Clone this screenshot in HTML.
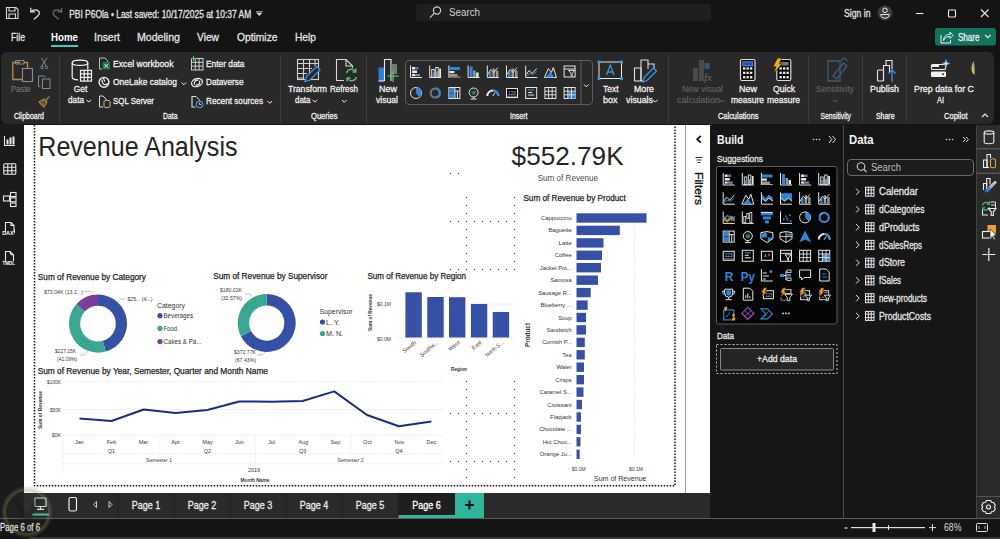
<!DOCTYPE html>
<html><head><meta charset="utf-8">
<style>
*{margin:0;padding:0;box-sizing:border-box}
html,body{width:1000px;height:539px;overflow:hidden;background:#141414;font-family:"Liberation Sans",sans-serif}
svg{position:absolute;left:0;top:0}
</style></head><body>
<svg width="1000" height="539" viewBox="0 0 1000 539" font-family="Liberation Sans">
<rect x="0" y="0" width="1000" height="539" fill="#141414" />
<rect x="1" y="52" width="993" height="72" rx="6" fill="#292929"/>
<rect x="0" y="124" width="24" height="394" fill="#1b1b1b" />
<rect x="24" y="125" width="662" height="368" fill="#ffffff" />
<rect x="685" y="125" width="1" height="368" fill="#a0a0a0" />
<rect x="686" y="125" width="24" height="368" fill="#ffffff" />
<rect x="710" y="125" width="133" height="393" fill="#161616" />
<rect x="843" y="125" width="1" height="393" fill="#4a4a4a" />
<rect x="844" y="125" width="132" height="393" fill="#161616" />
<rect x="976" y="125" width="24" height="393" fill="#2a2a2a" />
<rect x="976" y="125" width="1" height="393" fill="#444" />
<rect x="24" y="493" width="686" height="25" fill="#2a2a2a" />
<rect x="0" y="518" width="1000" height="21" fill="#151515" />
<rect x="0" y="518" width="1000" height="1" fill="#5a5a5a" />
<rect x="30" y="537" width="970" height="2" fill="#363636" />
<g fill="none" stroke="#d8d8d8" stroke-width="1.1"><path d="M6.5,7.5H16L18,9.5V18.5H6.5Z"/><path d="M9,7.5V11H15V7.5M9,18.5V14H15.5V18.5"/></g>
<g fill="none" stroke="#e0e0e0" stroke-width="1.2" stroke-linecap="round"><path d="M30.8,8.2V11.8H34.5"/><path d="M30.9,11.7C33,9.3 37.5,9.2 39.2,11.8C39.8,13 39.2,14.5 38,15.8L34.2,19"/></g>
<g fill="none" stroke="#6e6e6e" stroke-width="1.2" stroke-linecap="round"><path d="M61.7,8.2V11.8H58"/><path d="M61.6,11.7C59.5,9.3 55,9.2 53.3,11.8C52.7,13 53.3,14.5 54.5,15.8L58.3,19"/></g>
<text x="69.2" y="18" font-size="10" fill="#e6e6e6" textLength="182" lengthAdjust="spacingAndGlyphs"  stroke="#e6e6e6" stroke-width="0.28">PBI P6Ola • Last saved: 10/17/2025 at 10:37 AM</text>
<path d="M256,11.8H262.5M257,13.3H261.5L259.2,15.5Z" stroke="#ddd" stroke-width="0.9" fill="#ddd"/>
<rect x="416" y="4" width="295" height="17" rx="3" fill="#1f1f1f"/>
<g fill="none" stroke="#d0d0d0" stroke-width="1.2"><circle cx="437" cy="10.5" r="3.6"/><path d="M434.4,13.2L430,17.6"/></g>
<text x="449" y="16.2" font-size="10" fill="#cfcfcf" textLength="31" lengthAdjust="spacingAndGlyphs" >Search</text>
<text x="844" y="17" font-size="10" fill="#e0e0e0" textLength="26.5" lengthAdjust="spacingAndGlyphs"  stroke="#e0e0e0" stroke-width="0.28">Sign in</text>
<circle cx="885" cy="13" r="7.5" fill="#3b3b3b"/>
<g fill="none" stroke="#e8e8e8" stroke-width="1"><circle cx="885" cy="10.3" r="2.3"/><path d="M880.8,14.5H889.2A4.2,3.6 0 0 1 880.8,14.5Z"/></g>
<g stroke="#e8e8e8" stroke-width="1.1" fill="none"><path d="M916,13.5H923.5"/><rect x="948.5" y="10" width="7" height="7" rx="0.5"/><path d="M981,9.5L988.5,17M988.5,9.5L981,17"/></g>
<text x="11" y="41" font-size="11" fill="#e4e4e4" textLength="14" lengthAdjust="spacingAndGlyphs"  stroke="#e4e4e4" stroke-width="0.28">File</text>
<text x="94" y="41" font-size="11" fill="#e4e4e4" textLength="26" lengthAdjust="spacingAndGlyphs"  stroke="#e4e4e4" stroke-width="0.28">Insert</text>
<text x="137" y="41" font-size="11" fill="#e4e4e4" textLength="43" lengthAdjust="spacingAndGlyphs"  stroke="#e4e4e4" stroke-width="0.28">Modeling</text>
<text x="197" y="41" font-size="11" fill="#e4e4e4" textLength="22" lengthAdjust="spacingAndGlyphs"  stroke="#e4e4e4" stroke-width="0.28">View</text>
<text x="237" y="41" font-size="11" fill="#e4e4e4" textLength="40.5" lengthAdjust="spacingAndGlyphs"  stroke="#e4e4e4" stroke-width="0.28">Optimize</text>
<text x="295" y="41" font-size="11" fill="#e4e4e4" textLength="21" lengthAdjust="spacingAndGlyphs"  stroke="#e4e4e4" stroke-width="0.28">Help</text>
<text x="51" y="41" font-size="11" fill="#ffffff" textLength="27" lengthAdjust="spacingAndGlyphs" font-weight="bold" >Home</text>
<rect x="51" y="45" width="27" height="2" fill="#40c9b5" />
<rect x="935" y="28" width="61" height="17.5" rx="3" fill="#12735f"/>
<g fill="none" stroke="#e8f5f2" stroke-width="1"><path d="M941,35V43H950.5V40"/><path d="M943.5,40.5C944,36 946,34.5 950,34.5V32L953,35.5L950,38.5V36.5C947,36.5 945,37.5 943.5,40.5Z"/></g>
<text x="958" y="40.5" font-size="10" fill="#f0f0f0" textLength="21.5" lengthAdjust="spacingAndGlyphs"  stroke="#f0f0f0" stroke-width="0.28">Share</text>
<path d="M985,34.8L987.8,37.6L990.6,34.8" stroke="#f0f0f0" stroke-width="1.1" fill="none"/>
<rect x="59" y="55" width="1" height="67" fill="#3d3d3d" />
<rect x="280" y="55" width="1" height="67" fill="#3d3d3d" />
<rect x="366" y="55" width="1" height="67" fill="#3d3d3d" />
<rect x="668" y="55" width="1" height="67" fill="#3d3d3d" />
<rect x="808" y="55" width="1" height="67" fill="#3d3d3d" />
<rect x="862" y="55" width="1" height="67" fill="#3d3d3d" />
<rect x="906" y="55" width="1" height="67" fill="#3d3d3d" />
<text x="14" y="119.3" font-size="8.5" fill="#f0f0f0" textLength="30" lengthAdjust="spacingAndGlyphs"  stroke="#f0f0f0" stroke-width="0.28">Clipboard</text>
<text x="163" y="119.3" font-size="8.5" fill="#f0f0f0" textLength="14.5" lengthAdjust="spacingAndGlyphs"  stroke="#f0f0f0" stroke-width="0.28">Data</text>
<text x="311" y="119.3" font-size="8.5" fill="#f0f0f0" textLength="26.5" lengthAdjust="spacingAndGlyphs"  stroke="#f0f0f0" stroke-width="0.28">Queries</text>
<text x="510" y="119.3" font-size="8.5" fill="#f0f0f0" textLength="17.5" lengthAdjust="spacingAndGlyphs"  stroke="#f0f0f0" stroke-width="0.28">Insert</text>
<text x="718" y="119.3" font-size="8.5" fill="#f0f0f0" textLength="40.5" lengthAdjust="spacingAndGlyphs"  stroke="#f0f0f0" stroke-width="0.28">Calculations</text>
<text x="820.5" y="119.3" font-size="8.5" fill="#f0f0f0" textLength="30.5" lengthAdjust="spacingAndGlyphs"  stroke="#f0f0f0" stroke-width="0.28">Sensitivity</text>
<text x="876" y="119.3" font-size="8.5" fill="#f0f0f0" textLength="18.5" lengthAdjust="spacingAndGlyphs"  stroke="#f0f0f0" stroke-width="0.28">Share</text>
<text x="944" y="119.3" font-size="8.5" fill="#f0f0f0" textLength="23.5" lengthAdjust="spacingAndGlyphs"  stroke="#f0f0f0" stroke-width="0.28">Copilot</text>
<path d="M982,117L985,114L988,117" stroke="#eee" stroke-width="1.1" fill="none"/>
<g fill="none" stroke-width="1.3"><path d="M20,62.5H12.8V79.5H22" stroke="#c08a3c"/><path d="M15.5,60.5H24V64H15.5Z" stroke="#8a8a8a" stroke-width="1"/><path d="M24,62.5H27.5V68" stroke="#c08a3c"/><rect x="22.5" y="68.5" width="10" height="13" stroke="#8c8c8c" stroke-width="1.1"/></g>
<text x="11" y="91.5" font-size="9" fill="#808080" textLength="19.5" lengthAdjust="spacingAndGlyphs" >Paste</text>
<g fill="none" stroke="#8a8a8a" stroke-width="1"><path d="M41.5,58L46.5,66M47,58L42,66"/><circle cx="42" cy="67.5" r="1.3" stroke="#5a8ab0"/><circle cx="46.5" cy="67.5" r="1.3" stroke="#5a8ab0"/><path d="M40.5,86.5H38.5V76H44.5L45.5,77"/><rect x="42.5" y="79" width="7.5" height="9.5"/></g>
<g fill="none" stroke-width="1.1"><path d="M45,101L49.5,96.5" stroke="#8a8a8a"/><path d="M39,102L44,99L47,102L44,107Z" stroke="#b0813a" fill="#6a5030"/></g>
<g fill="none" stroke="#f4f4f4" stroke-width="1.2"><ellipse cx="80" cy="62.8" rx="7.8" ry="2.6"/><path d="M72.2,62.8V77.2C72.2,78.6 74.5,79.6 78,79.9"/><path d="M87.8,62.8V69.5"/><rect x="80.5" y="70.3" width="11" height="10.8" fill="#292929"/><path d="M80.5,73.8H91.5M80.5,77.4H91.5M84.2,70.3V81M87.8,70.3V81"/></g>
<text x="73.8" y="92" font-size="9.5" fill="#f2f2f2" textLength="13.5" lengthAdjust="spacingAndGlyphs"  stroke="#f2f2f2" stroke-width="0.28">Get</text>
<text x="68" y="103.2" font-size="9.5" fill="#f2f2f2" textLength="16" lengthAdjust="spacingAndGlyphs"  stroke="#f2f2f2" stroke-width="0.28">data</text>
<path d="M86.5,99.8L88.8,102.1L91.1,99.8" stroke="#f2f2f2" stroke-width="1" fill="none"/>
<g fill="none" stroke="#bdbdbd" stroke-width="1"><path d="M105,58H99.5V69H102"/><path d="M105,58L107.5,60.5V62"/></g><rect x="102.5" y="62" width="7.5" height="7.5" fill="#1e7a45"/><path d="M104.5,64L108,67.5M108,64L104.5,67.5" stroke="#fff" stroke-width="0.9"/>
<text x="113" y="67.2" font-size="9.5" fill="#f2f2f2" textLength="60.5" lengthAdjust="spacingAndGlyphs"  stroke="#f2f2f2" stroke-width="0.28">Excel workbook</text>
<g fill="none" stroke="#f0f0f0" stroke-width="1.2"><circle cx="104" cy="82.3" r="4.9" stroke-width="1.4"/><path d="M101.8,79.5Q102.3,83.6 104,84.5Q106.2,85 108.6,83.2M103.6,77.6Q103.6,80.2 105,81.5"/></g>
<text x="113" y="85.3" font-size="9.5" fill="#f2f2f2" textLength="64" lengthAdjust="spacingAndGlyphs"  stroke="#f2f2f2" stroke-width="0.28">OneLake catalog</text>
<path d="M181.5,82.5L183.8,84.8L186.1,82.5" stroke="#f2f2f2" stroke-width="1" fill="none"/>
<g fill="none" stroke-width="1"><path d="M103,96H99.5V107H103" stroke="#d8d8d8"/><path d="M103,96L106,99V100" stroke="#d8d8d8"/><path d="M104,101.5C104,100 110,100 110,101.5V106.5C110,108 104,108 104,106.5Z" stroke="#e0b870"/></g>
<text x="113" y="104" font-size="9.5" fill="#f2f2f2" textLength="41" lengthAdjust="spacingAndGlyphs"  stroke="#f2f2f2" stroke-width="0.28">SQL Server</text>
<g fill="none" stroke="#d0d0d0" stroke-width="1"><rect x="191.5" y="58.5" width="11.5" height="11.5"/><path d="M191.5,62.3H203M191.5,66.1H203M195.3,58.5V70M199.1,58.5V70"/></g><path d="M191,58.5H196M193.5,56V61" stroke="#4fc36a" stroke-width="1.2"/>
<text x="206" y="67.2" font-size="9.5" fill="#f2f2f2" textLength="38.5" lengthAdjust="spacingAndGlyphs"  stroke="#f2f2f2" stroke-width="0.28">Enter data</text>
<g fill="none" stroke="#f0f0f0" stroke-width="1.2"><ellipse cx="197" cy="82.6" rx="5.6" ry="3.9" transform="rotate(-20 197 82.6)"/><path d="M194.5,84.5C193.5,82 195.5,79.8 198.5,80.2M199.5,80.8C200.5,83.2 198.5,85.5 195.5,85"/></g>
<text x="206" y="85.3" font-size="9.5" fill="#f2f2f2" textLength="37.5" lengthAdjust="spacingAndGlyphs"  stroke="#f2f2f2" stroke-width="0.28">Dataverse</text>
<g fill="none" stroke-width="1"><path d="M196,96.5H192V107H195.5" stroke="#e0e0e0" stroke-width="1.1"/><path d="M196,96.5L199.5,100V100.5" stroke="#e0e0e0"/><circle cx="199.6" cy="104.4" r="3.4" stroke="#6aaee8" stroke-width="1"/><path d="M199.6,102.6V104.6H201.2" stroke="#e8e8e8" stroke-width="0.9"/></g>
<text x="206" y="104" font-size="9.5" fill="#f2f2f2" textLength="57" lengthAdjust="spacingAndGlyphs"  stroke="#f2f2f2" stroke-width="0.28">Recent sources</text>
<path d="M267.5,101L269.8,103.3L272.1,101" stroke="#f2f2f2" stroke-width="1" fill="none"/>
<g fill="none" stroke="#d0d0d0" stroke-width="1.1"><rect x="297.5" y="59.5" width="21" height="20"/><path d="M297.5,63.5H318.5M297.5,68.5H312M297.5,73.5H307M297.5,78H304M303.5,59.5V79.5M309.5,59.5V73M315,59.5V66"/></g><path d="M305,81.5L306.5,76.5L316.5,66.5L320,70L310,80Z" fill="#292929" stroke="#3a96dd" stroke-width="1.3"/>
<text x="288" y="91.8" font-size="9.5" fill="#f2f2f2" textLength="39" lengthAdjust="spacingAndGlyphs"  stroke="#f2f2f2" stroke-width="0.28">Transform</text>
<text x="295" y="103.2" font-size="9.5" fill="#f2f2f2" textLength="15.5" lengthAdjust="spacingAndGlyphs"  stroke="#f2f2f2" stroke-width="0.28">data</text>
<path d="M312.5,99.8L314.8,102.1L317.1,99.8" stroke="#f2f2f2" stroke-width="1" fill="none"/>
<g fill="none" stroke="#d8d8d8" stroke-width="1.1"><path d="M346,59.5H336.5V80.5H344"/><path d="M346,59.5L352.5,66V68"/><path d="M346,59.5V66H352.5"/></g><g fill="none" stroke="#5ac46a" stroke-width="1.3"><path d="M346.5,73A5,5 0 0 1 355.5,71.5"/><path d="M356.5,77A5,5 0 0 1 347.5,78.5"/><path d="M355.8,68.5V72H352.5M347,81.5V78H350.5"/></g>
<text x="330" y="91.8" font-size="9.5" fill="#f2f2f2" textLength="28" lengthAdjust="spacingAndGlyphs"  stroke="#f2f2f2" stroke-width="0.28">Refresh</text>
<path d="M342,100L344.3,102.3L346.6,100" stroke="#f2f2f2" stroke-width="1" fill="none"/>
<rect x="378.5" y="67.5" width="6" height="13.5" fill="#2e7fd4"/><g fill="none" stroke="#e8e8e8" stroke-width="1.1"><path d="M384.5,81V59.5H391V81"/><path d="M378.5,81H384.5"/></g><rect x="391.5" y="64" width="5.5" height="10" fill="#777"/><path d="M393,70.5V82M387.5,76.2H398.5" stroke="#4fc36a" stroke-width="1.3"/>
<text x="379" y="91.8" font-size="9.5" fill="#f2f2f2" textLength="18" lengthAdjust="spacingAndGlyphs"  stroke="#f2f2f2" stroke-width="0.28">New</text>
<text x="376" y="103.2" font-size="9.5" fill="#f2f2f2" textLength="22" lengthAdjust="spacingAndGlyphs"  stroke="#f2f2f2" stroke-width="0.28">visual</text>
<rect x="405.5" y="60.5" width="187" height="44" rx="3.5" fill="none" stroke="#5c5c5c" stroke-width="1"/>
<rect x="580.5" y="61" width="1" height="43" fill="#5c5c5c" />
<path d="M584,84.5L586.3,86.8L588.6,84.5" stroke="#f2f2f2" stroke-width="1" fill="none"/>
<g stroke-width="1">
<path d="M410.5,65.5V77.5H422.0" stroke="#e8e8e8" fill="none"/><rect x="412.0" y="67.0" width="3" height="2.5" fill="#e8e8e8"/><rect x="415.0" y="67.0" width="3.5" height="2.5" fill="#2f86d8"/><rect x="412.0" y="70.5" width="5" height="2.5" fill="#e8e8e8"/><rect x="412.0" y="74.0" width="3" height="2.2" fill="#e8e8e8"/><rect x="415.0" y="74.0" width="5" height="2.2" fill="#888"/>
<circle cx="416.0" cy="93" r="5.5" fill="none" stroke="#e8e8e8"/><path d="M416.0,87.5A5.5,5.5 0 0 1 419.5,97.2L416.0,93Z" fill="#2f86d8"/>
<path d="M429.7,65.5V77.5H441.2" stroke="#e8e8e8" fill="none"/><rect x="431.7" y="69.5" width="2.5" height="7.5" fill="none" stroke="#e8e8e8" stroke-width="0.9"/><rect x="432.2" y="72.5" width="1.8" height="4" fill="#2f86d8"/><rect x="435.7" y="67.5" width="2.5" height="9.5" fill="none" stroke="#e8e8e8" stroke-width="0.9"/><rect x="436.2" y="71.5" width="1.8" height="5" fill="#999"/><rect x="439.2" y="68.5" width="1.8" height="8.5" fill="#e8e8e8"/>
<circle cx="435.2" cy="93" r="4.5" fill="none" stroke="#777" stroke-width="2"/><path d="M435.2,88.5A4.5,4.5 0 0 1 436.2,97.4" fill="none" stroke="#2f86d8" stroke-width="2"/>
<path d="M448.9,65.5V77.5" stroke="#e8e8e8" fill="none"/><rect x="449.4" y="67.0" width="10.5" height="3" fill="#2f86d8"/><rect x="449.4" y="71.0" width="5" height="2.2" fill="#e8e8e8"/><rect x="449.4" y="74.0" width="8" height="2.5" fill="#999"/><path d="M448.4,77.0H460.4" stroke="#aaa"/>
<rect x="448.9" y="87.5" width="11" height="11" fill="none" stroke="#e8e8e8"/><rect x="449.4" y="88" width="5" height="5" fill="#2f86d8"/><rect x="449.4" y="93.5" width="5" height="4.5" fill="#2f86d8"/><path d="M454.9,88V98M454.9,91H459.4M457.4,91V98" stroke="#e8e8e8"/>
<path d="M468.1,65.5V77.5H479.6" stroke="#e8e8e8" fill="none"/><rect x="469.6" y="66.5" width="3" height="10.5" fill="#2f86d8"/><rect x="473.1" y="70.5" width="2.5" height="6.5" fill="#999"/><rect x="476.1" y="72.5" width="2.5" height="4.5" fill="#e8e8e8"/>
<circle cx="473.6" cy="92.5" r="4.5" fill="none" stroke="#e8e8e8"/><circle cx="473.6" cy="92.5" r="2.6" fill="#1d4a30"/><path d="M472.1,91.5L474.1,94L475.1,91" stroke="#4cb070" fill="none" stroke-width="0.9"/><path d="M473.6,97V99M470.6,99H476.6" stroke="#e8e8e8"/>
<path d="M487.3,65.5V77.5H498.8" stroke="#e8e8e8" fill="none"/><rect x="488.8" y="71.5" width="2.5" height="5.5" fill="#2f86d8"/><rect x="492.3" y="68.5" width="2.5" height="8.5" fill="#999"/><rect x="495.8" y="70.5" width="2.5" height="6.5" fill="#999"/><path d="M487.8,74.5L490.8,69.5L493.8,72.5L497.8,67.5" stroke="#e8e8e8" fill="none" stroke-width="0.9"/>
<path d="M487.3,96A5.5,5.5 0 0 1 498.3,96" fill="none" stroke="#e8e8e8" stroke-width="2"/><path d="M492.8,90.5A5.5,5.5 0 0 1 498.3,96" fill="none" stroke="#2f86d8" stroke-width="2"/><path d="M492.8,96L494.8,93" stroke="#e8e8e8"/>
<path d="M506.5,65.5V77.5H518.0" stroke="#e8e8e8" fill="none"/><rect x="508.0" y="71.5" width="2.5" height="5.5" fill="#2f86d8"/><rect x="511.5" y="68.5" width="2.5" height="8.5" fill="#999"/><rect x="515.0" y="70.5" width="2.5" height="6.5" fill="#999"/><path d="M507.0,74.5L510.0,69.5L513.0,72.5L517.0,67.5" stroke="#e8e8e8" fill="none" stroke-width="0.9"/>
<rect x="506.5" y="88.5" width="11" height="9" fill="#0a0a0a" stroke="#e8e8e8"/><text x="508.0" y="94.6" font-size="5.5" fill="#8ab8e8" textLength="8" lengthAdjust="spacingAndGlyphs">123</text><path d="M507.0,96.2H517.0" stroke="#888"/>
<path d="M525.7,65.5V77.5H537.2" stroke="#e8e8e8" fill="none"/><path d="M526.2,74.5L529.2,70.5L532.2,73.5L536.7,68.5" stroke="#e8e8e8" fill="none"/><path d="M526.2,76.0L530.2,73.5L533.2,74.5L536.7,71.5" stroke="#2f86d8" fill="none"/>
<rect x="525.7" y="87.5" width="11" height="11" fill="none" stroke="#e8e8e8"/><path d="M528.2,90H534.2" stroke="#2f86d8" stroke-width="1.2"/><path d="M528.2,92.5H532.2M528.2,95H534.2" stroke="#e8e8e8"/>
<path d="M544.4,77.5L548.4,68.5L551.4,72.5L553.4,67.5L556.4,77.5Z" fill="none" stroke="#e8e8e8"/><path d="M545.4,77.5L550.4,71.5L554.4,77.5Z" fill="#2f86d8"/>
<rect x="544.9" y="87.5" width="11" height="11" fill="none" stroke="#e8e8e8"/><path d="M544.9,91.2H555.9M544.9,94.8H555.9M548.6,87.5V98.5M552.1999999999999,87.5V98.5" stroke="#e8e8e8" stroke-width="0.9"/>
<rect x="564.1" y="66.0" width="11" height="11" fill="none" stroke="#e8e8e8"/><path d="M564.1,69.0H575.1" stroke="#e8e8e8"/><path d="M568.6,70.5H574.6L572.1,73.5V76.5L571.1,75.5V73.5Z" fill="none" stroke="#e8e8e8" stroke-width="0.9"/>
<rect x="564.1" y="87.5" width="11" height="11" fill="none" stroke="#e8e8e8"/><rect x="568.1" y="91.5" width="7" height="7" fill="#2f86d8"/><path d="M564.1,91.2H575.1M564.1,94.8H575.1M567.8000000000001,87.5V98.5M571.4,87.5V98.5" stroke="#e8e8e8" stroke-width="0.9"/>
</g>
<rect x="599" y="62" width="22.5" height="16.5" fill="none" stroke="#e8e8e8" stroke-width="1"/>
<rect x="597.5" y="60.5" width="3" height="3" fill="#3a96dd"/>
<rect x="620.0" y="60.5" width="3" height="3" fill="#3a96dd"/>
<rect x="597.5" y="77.0" width="3" height="3" fill="#3a96dd"/>
<rect x="620.0" y="77.0" width="3" height="3" fill="#3a96dd"/>
<path d="M606.5,75L610.3,65L614,75M607.8,72H612.8" stroke="#3a96dd" stroke-width="1.3" fill="none"/>
<text x="603" y="91.8" font-size="9.5" fill="#f2f2f2" textLength="15.5" lengthAdjust="spacingAndGlyphs"  stroke="#f2f2f2" stroke-width="0.28">Text</text>
<text x="603" y="103.2" font-size="9.5" fill="#f2f2f2" textLength="14.5" lengthAdjust="spacingAndGlyphs"  stroke="#f2f2f2" stroke-width="0.28">box</text>
<g fill="none" stroke="#e0e0e0" stroke-width="1.1"><path d="M634.5,81V68H641V81"/><path d="M641,81V60H648V69"/><path d="M648,64H654V69"/><path d="M634.5,81H644"/></g><path d="M643,82L644,77.5L653.5,68L656.5,71L647,80.5Z" fill="#292929" stroke="#3a96dd" stroke-width="1.3"/>
<text x="634" y="91.8" font-size="9.5" fill="#f2f2f2" textLength="20" lengthAdjust="spacingAndGlyphs"  stroke="#f2f2f2" stroke-width="0.28">More</text>
<text x="626" y="103.2" font-size="9.5" fill="#f2f2f2" textLength="27" lengthAdjust="spacingAndGlyphs"  stroke="#f2f2f2" stroke-width="0.28">visuals</text>
<path d="M653,99.8L655.3,102.1L657.6,99.8" stroke="#f2f2f2" stroke-width="1" fill="none"/>
<g fill="#4a4a4a"><rect x="693" y="68" width="5" height="13"/><rect x="699" y="60" width="5" height="21"/></g><rect x="704.5" y="63" width="5" height="6" fill="#2b5a80"/><text x="704" y="81" font-size="11" font-style="italic" fill="#6a6a6a" font-family="Liberation Serif">fx</text>
<text x="682" y="91.8" font-size="9.5" fill="#6b6b6b" textLength="41" lengthAdjust="spacingAndGlyphs" >New visual</text>
<text x="677" y="103.2" font-size="9.5" fill="#6b6b6b" textLength="43" lengthAdjust="spacingAndGlyphs" >calculation</text>
<path d="M720,99.8L722.3,102.1L724.6,99.8" stroke="#6b6b6b" stroke-width="1" fill="none"/>
<rect x="740.5" y="59.5" width="14.5" height="21" rx="1.5" fill="#080808" stroke="#e0e0e0" stroke-width="1.2"/><rect x="742.8" y="61.8" width="10" height="4" fill="#1f4fb0" stroke="#6ab0f0" stroke-width="0.7"/>
<rect x="743.0" y="67.3" width="2.3" height="2.3" fill="#f0f0f0"/>
<rect x="746.5" y="67.3" width="2.3" height="2.3" fill="#f0f0f0"/>
<rect x="750.0" y="67.3" width="2.3" height="2.3" fill="#f0f0f0"/>
<rect x="743.0" y="71.7" width="2.3" height="2.3" fill="#f0f0f0"/>
<rect x="746.5" y="71.7" width="2.3" height="2.3" fill="#f0f0f0"/>
<rect x="750.0" y="71.7" width="2.3" height="2.3" fill="#f0f0f0"/>
<rect x="743.0" y="76.1" width="2.3" height="2.3" fill="#f0f0f0"/>
<rect x="746.5" y="76.1" width="2.3" height="2.3" fill="#f0f0f0"/>
<rect x="750.0" y="76.1" width="2.3" height="2.3" fill="#f0f0f0"/>
<text x="739" y="91.8" font-size="9.5" fill="#f2f2f2" textLength="18" lengthAdjust="spacingAndGlyphs"  stroke="#f2f2f2" stroke-width="0.28">New</text>
<text x="731" y="103.2" font-size="9.5" fill="#f2f2f2" textLength="33" lengthAdjust="spacingAndGlyphs"  stroke="#f2f2f2" stroke-width="0.28">measure</text>
<rect x="776.8" y="59.5" width="14" height="21" rx="1.5" fill="#080808" stroke="#d8d8d8" stroke-width="1.2"/><rect x="779" y="62" width="9.5" height="3.5" fill="#777"/>
<rect x="779.5" y="67.3" width="2.3" height="2.3" fill="#f0f0f0"/>
<rect x="783.0" y="67.3" width="2.3" height="2.3" fill="#f0f0f0"/>
<rect x="786.5" y="67.3" width="2.3" height="2.3" fill="#f0f0f0"/>
<rect x="779.5" y="71.7" width="2.3" height="2.3" fill="#f0f0f0"/>
<rect x="783.0" y="71.7" width="2.3" height="2.3" fill="#f0f0f0"/>
<rect x="786.5" y="71.7" width="2.3" height="2.3" fill="#f0f0f0"/>
<rect x="779.5" y="76.1" width="2.3" height="2.3" fill="#f0f0f0"/>
<rect x="783.0" y="76.1" width="2.3" height="2.3" fill="#f0f0f0"/>
<rect x="786.5" y="76.1" width="2.3" height="2.3" fill="#f0f0f0"/>
<path d="M777.5,58H782L779.2,63.8H782.2L773.5,73.5L775.8,66.8H772.8Z" fill="#f2a81e" stroke="#1a1a1a" stroke-width="0.7"/>
<text x="773" y="91.8" font-size="9.5" fill="#f2f2f2" textLength="22" lengthAdjust="spacingAndGlyphs"  stroke="#f2f2f2" stroke-width="0.28">Quick</text>
<text x="767" y="103.2" font-size="9.5" fill="#f2f2f2" textLength="33" lengthAdjust="spacingAndGlyphs"  stroke="#f2f2f2" stroke-width="0.28">measure</text>
<g fill="none" stroke="#3b5a78" stroke-width="1.3"><path d="M828,61H840V81H828Z"/><path d="M833,76L843.5,63L847,66L836.5,79Z"/><path d="M840,61L844,58L847.5,61"/></g>
<text x="816" y="91.8" font-size="9.5" fill="#6b6b6b" textLength="38" lengthAdjust="spacingAndGlyphs" >Sensitivity</text>
<path d="M833,99.8L835.3,102.1L837.6,99.8" stroke="#6b6b6b" stroke-width="1" fill="none"/>
<g fill="none" stroke="#e8e8e8" stroke-width="1.1"><rect x="877.5" y="70" width="6" height="11" rx="1"/><path d="M883.5,81V65.5H889.5V73"/><path d="M886,65.5V60.5H892V69"/></g><path d="M892,82V70M888.5,73.5L892,70L895.5,73.5" stroke="#3a96dd" stroke-width="1.3" fill="none"/>
<text x="870" y="91.8" font-size="9.5" fill="#f2f2f2" textLength="29" lengthAdjust="spacingAndGlyphs"  stroke="#f2f2f2" stroke-width="0.28">Publish</text>
<rect x="931.5" y="64.5" width="14" height="5" rx="1" fill="none" stroke="#f0f0f0" stroke-width="1.1"/><rect x="931" y="71.5" width="15" height="5.5" rx="1" fill="#f0f0f0"/><circle cx="943" cy="74.2" r="1" fill="#292929"/><path d="M932,66H939" stroke="#f0f0f0" stroke-width="2"/>
<path d="M946,59.5L947,62.5L950,63.5L947,64.5L946,67.5L945,64.5L942,63.5L945,62.5Z" fill="#cfe6ff" stroke="#3a96dd" stroke-width="0.6"/>
<text x="914" y="91.8" font-size="9.5" fill="#f2f2f2" textLength="60" lengthAdjust="spacingAndGlyphs"  stroke="#f2f2f2" stroke-width="0.28">Prep data for C</text>
<text x="937" y="103.2" font-size="9.5" fill="#f2f2f2" textLength="7" lengthAdjust="spacingAndGlyphs"  stroke="#f2f2f2" stroke-width="0.28">AI</text>
<path d="M973.5,61C974.5,65 975,70 974.5,75C973,74 971.5,72 971.5,69C971.5,66 972.5,63 973.5,61Z" fill="#e8c030"/><path d="M973.5,61C974.5,65 975,70 974.5,75L973.5,68Z" fill="#2c8fe0"/>
<g stroke="#111" stroke-width="1.5" stroke-dasharray="1.5 1.5" fill="none"><path d="M34.5,125V485.8H675V125"/></g>
<g stroke="#2a2a2a" stroke-width="1" stroke-dasharray="1 7" fill="none">
<path d="M450,173.5H462"/>
<path d="M466.5,197V272M514.5,197V272"/>
<path d="M450,221.5H517M450,269.5H517"/>
<path d="M466.5,381V480M514.5,381V480"/>
<path d="M450,413.5H517M450,461.5H517"/>
</g>
<text x="38.3" y="156.2" font-size="26.8" fill="#252423" textLength="199.2" lengthAdjust="spacingAndGlyphs" >Revenue Analysis</text>
<text x="511.6" y="165.4" font-size="25.5" fill="#252423" textLength="112" lengthAdjust="spacingAndGlyphs" >$552.79K</text>
<text x="537.7" y="180.8" font-size="8.3" fill="#4a4a4a" textLength="60.3" lengthAdjust="spacingAndGlyphs" >Sum of Revenue</text>
<text x="37.8" y="280.2" font-size="8.5" fill="#252423" textLength="108.2" lengthAdjust="spacingAndGlyphs" stroke="#252423" stroke-width="0.25">Sum of Revenue by Category</text>
<text x="213.2" y="279" font-size="8.5" fill="#252423" textLength="114.2" lengthAdjust="spacingAndGlyphs" stroke="#252423" stroke-width="0.25">Sum of Revenue by Supervisor</text>
<text x="367.5" y="278.9" font-size="8.5" fill="#252423" textLength="98.5" lengthAdjust="spacingAndGlyphs" stroke="#252423" stroke-width="0.25">Sum of Revenue by Region</text>
<text x="523.4" y="200.7" font-size="8.5" fill="#252423" textLength="102.3" lengthAdjust="spacingAndGlyphs" stroke="#252423" stroke-width="0.25">Sum of Revenue by Product</text>
<text x="37.7" y="374" font-size="8.5" fill="#252423" textLength="230.3" lengthAdjust="spacingAndGlyphs" stroke="#252423" stroke-width="0.25">Sum of Revenue by Year, Semester, Quarter and Month Name</text>
<path d="M98.00,294.60A29,29 0 0 1 105.75,351.55L102.76,340.75A17.8,17.8 0 0 0 98.00,305.80Z" fill="#3650a6"/>
<path d="M105.75,351.55A29,29 0 0 1 76.62,304.01L84.88,311.57A17.8,17.8 0 0 0 102.76,340.75Z" fill="#3aa68f"/>
<path d="M76.62,304.01A29,29 0 0 1 98.00,294.60L98.00,305.80A17.8,17.8 0 0 0 84.88,311.57Z" fill="#7d3c98"/>
<g stroke="#aaa" stroke-width="0.7" fill="none"><path d="M84,291.5H91L93,294"/><path d="M117,302L121,299H125"/><path d="M80,355H84L88,351"/></g>
<text x="44" y="293.5" font-size="5.5" fill="#3a3a3a" textLength="39" lengthAdjust="spacingAndGlyphs" >$73.04K (13.2...)</text>
<text x="127.5" y="301.2" font-size="5.5" fill="#3a3a3a" textLength="25" lengthAdjust="spacingAndGlyphs" >$25... (4...)</text>
<text x="55" y="352.8" font-size="5.5" fill="#3a3a3a" textLength="21" lengthAdjust="spacingAndGlyphs" >$227.15K</text>
<text x="57" y="360.6" font-size="5.5" fill="#3a3a3a" textLength="20" lengthAdjust="spacingAndGlyphs" >(41.09%)</text>
<text x="157" y="308.2" font-size="7" fill="#333" textLength="28" lengthAdjust="spacingAndGlyphs" >Category</text>
<circle cx="160" cy="315.7" r="2.6" fill="#3650a6"/>
<text x="163.5" y="318.2" font-size="7" fill="#333" textLength="29.5" lengthAdjust="spacingAndGlyphs" >Beverages</text>
<circle cx="160" cy="328.4" r="2.6" fill="#3aa68f"/>
<text x="163.5" y="330.9" font-size="7" fill="#333" textLength="13.5" lengthAdjust="spacingAndGlyphs" >Food</text>
<circle cx="160" cy="341.6" r="2.6" fill="#7d3c98"/>
<text x="163.5" y="344.1" font-size="7" fill="#333" textLength="38" lengthAdjust="spacingAndGlyphs" >Cakes &amp; Pa...</text>
<path d="M266.70,294.00A29,29 0 1 1 240.93,336.30L251.06,331.07A17.6,17.6 0 1 0 266.70,305.40Z" fill="#3650a6"/>
<path d="M240.93,336.30A29,29 0 0 1 266.70,294.00L266.70,305.40A17.6,17.6 0 0 0 251.06,331.07Z" fill="#3aa68f"/>
<g stroke="#aaa" stroke-width="0.7" fill="none"><path d="M245,294H250L252,297"/><path d="M257,355H262L265,352"/></g>
<text x="220" y="292" font-size="5.5" fill="#3a3a3a" textLength="22" lengthAdjust="spacingAndGlyphs" >$180.02K</text>
<text x="221" y="300" font-size="5.5" fill="#3a3a3a" textLength="21" lengthAdjust="spacingAndGlyphs" >(32.57%)</text>
<text x="234" y="354" font-size="5.5" fill="#3a3a3a" textLength="22" lengthAdjust="spacingAndGlyphs" >$372.77K</text>
<text x="235" y="362" font-size="5.5" fill="#3a3a3a" textLength="21" lengthAdjust="spacingAndGlyphs" >(67.43%)</text>
<text x="319.6" y="313.5" font-size="7" fill="#333" textLength="33" lengthAdjust="spacingAndGlyphs" >Supervisor</text>
<circle cx="322.5" cy="322" r="2.6" fill="#3650a6"/>
<text x="326" y="324.5" font-size="7" fill="#333" textLength="14" lengthAdjust="spacingAndGlyphs" >L. Y.</text>
<circle cx="322.5" cy="333.5" r="2.6" fill="#3aa68f"/>
<text x="326" y="336" font-size="7" fill="#333" textLength="17" lengthAdjust="spacingAndGlyphs" >M. N.</text>
<g stroke="#ccc" stroke-width="0.7" stroke-dasharray="1 1.5"><path d="M396,304H515M396,338H515"/></g>
<rect x="405.4" y="292.3" width="16.4" height="45.2" fill="#3650a6"/>
<rect x="427.3" y="297" width="16.4" height="40.5" fill="#3650a6"/>
<rect x="449" y="297.2" width="16.4" height="40.3" fill="#3650a6"/>
<rect x="470.9" y="304" width="16.4" height="33.5" fill="#3650a6"/>
<rect x="492.7" y="312" width="16.4" height="25.5" fill="#3650a6"/>
<text x="377" y="306" font-size="5.5" fill="#3a3a3a" textLength="14" lengthAdjust="spacingAndGlyphs" >$0.1M</text>
<text x="377" y="340.5" font-size="5.5" fill="#3a3a3a" textLength="14" lengthAdjust="spacingAndGlyphs" >$0.0M</text>
<text x="0" y="0" font-size="5.5" fill="#333" font-weight="bold" transform="translate(372,331) rotate(-90)" textLength="37" lengthAdjust="spacingAndGlyphs">Sum of Revenue</text>
<text x="0" y="0" font-size="5.5" fill="#3a3a3a" text-anchor="end" transform="translate(416.6,343) rotate(-40)" textLength="16" lengthAdjust="spacingAndGlyphs">South</text>
<text x="0" y="0" font-size="5.5" fill="#3a3a3a" text-anchor="end" transform="translate(438.5,343) rotate(-40)" textLength="22" lengthAdjust="spacingAndGlyphs">Southw...</text>
<text x="0" y="0" font-size="5.5" fill="#3a3a3a" text-anchor="end" transform="translate(460.2,343) rotate(-40)" textLength="13" lengthAdjust="spacingAndGlyphs">West</text>
<text x="0" y="0" font-size="5.5" fill="#3a3a3a" text-anchor="end" transform="translate(482,343) rotate(-40)" textLength="11" lengthAdjust="spacingAndGlyphs">East</text>
<text x="0" y="0" font-size="5.5" fill="#3a3a3a" text-anchor="end" transform="translate(503.9,343) rotate(-40)" textLength="22" lengthAdjust="spacingAndGlyphs">North-S...</text>
<text x="451" y="371" font-size="5.5" fill="#333" textLength="16" lengthAdjust="spacingAndGlyphs" font-weight="bold" >Region</text>
<g stroke="#d6d6d6" stroke-width="0.7" stroke-dasharray="1 1.5" fill="none"><path d="M62.6,381.7H443.5M62.6,409.5H443.5M62.6,435.3H443.5M62.6,454H443.5M62.6,463.7H443.5"/>
<path d="M159.8,436V454M255.3,436V473M350.6,436V454M62.6,436V475"/></g>
<text x="47" y="383.7" font-size="5" fill="#3a3a3a" textLength="14" lengthAdjust="spacingAndGlyphs" >$100K</text>
<text x="50" y="411.5" font-size="5" fill="#3a3a3a" textLength="11" lengthAdjust="spacingAndGlyphs" >$50K</text>
<text x="52" y="437.3" font-size="5" fill="#3a3a3a" textLength="9" lengthAdjust="spacingAndGlyphs" >$0K</text>
<text x="0" y="0" font-size="5" fill="#333" font-weight="bold" transform="translate(42,429) rotate(-90)" textLength="38" lengthAdjust="spacingAndGlyphs">Sum of Revenue</text>
<text x="79.5" y="444" font-size="5.5" fill="#3a3a3a" text-anchor="middle" >Jan</text>
<text x="111.5" y="444" font-size="5.5" fill="#3a3a3a" text-anchor="middle" >Feb</text>
<text x="143.5" y="444" font-size="5.5" fill="#3a3a3a" text-anchor="middle" >Mar</text>
<text x="175.5" y="444" font-size="5.5" fill="#3a3a3a" text-anchor="middle" >Apr</text>
<text x="207.5" y="444" font-size="5.5" fill="#3a3a3a" text-anchor="middle" >May</text>
<text x="239.4" y="444" font-size="5.5" fill="#3a3a3a" text-anchor="middle" >Jun</text>
<text x="271.4" y="444" font-size="5.5" fill="#3a3a3a" text-anchor="middle" >Jul</text>
<text x="303.4" y="444" font-size="5.5" fill="#3a3a3a" text-anchor="middle" >Aug</text>
<text x="335.4" y="444" font-size="5.5" fill="#3a3a3a" text-anchor="middle" >Sep</text>
<text x="367.4" y="444" font-size="5.5" fill="#3a3a3a" text-anchor="middle" >Oct</text>
<text x="399.4" y="444" font-size="5.5" fill="#3a3a3a" text-anchor="middle" >Nov</text>
<text x="431.4" y="444" font-size="5.5" fill="#3a3a3a" text-anchor="middle" >Dec</text>
<text x="111.5" y="452.5" font-size="5.5" fill="#3a3a3a" text-anchor="middle" >Q1</text>
<text x="207.4" y="452.5" font-size="5.5" fill="#3a3a3a" text-anchor="middle" >Q2</text>
<text x="302.6" y="452.5" font-size="5.5" fill="#3a3a3a" text-anchor="middle" >Q3</text>
<text x="398.9" y="452.5" font-size="5.5" fill="#3a3a3a" text-anchor="middle" >Q4</text>
<text x="159" y="461.5" font-size="5.5" fill="#3a3a3a" textLength="26" lengthAdjust="spacingAndGlyphs" text-anchor="middle" >Semester 1</text>
<text x="350.6" y="461.5" font-size="5.5" fill="#3a3a3a" textLength="26" lengthAdjust="spacingAndGlyphs" text-anchor="middle" >Semester 2</text>
<text x="254" y="472" font-size="5.5" fill="#3a3a3a" text-anchor="middle" >2019</text>
<text x="255" y="481.5" font-size="5.5" fill="#333" textLength="29" lengthAdjust="spacingAndGlyphs" text-anchor="middle" font-weight="bold" >Month Name</text>
<polyline points="79.5,418.6 111.5,421 143.7,409.5 175.5,413 207.4,410 239.2,401.5 271,401.7 302.6,401 334.2,391.4 367,415 398.9,426.3 431.4,421.5" fill="none" stroke="#1c2c82" stroke-width="2" stroke-linejoin="round"/>
<path d="M634.6,210V462" stroke="#ddd" stroke-width="0.7" stroke-dasharray="1 1.5"/>
<rect x="576.5" y="213.3" width="70.0" height="9.4" fill="#3650a6"/>
<text x="571.7" y="220.0" font-size="5.8" fill="#333" text-anchor="end" >Cappuccino</text>
<rect x="576.5" y="225.7" width="43.3" height="9.4" fill="#3650a6"/>
<text x="571.7" y="232.4" font-size="5.8" fill="#333" text-anchor="end" >Baguette</text>
<rect x="576.5" y="238.2" width="27.0" height="9.4" fill="#3650a6"/>
<text x="571.7" y="244.9" font-size="5.8" fill="#333" text-anchor="end" >Latte</text>
<rect x="576.5" y="250.6" width="25.5" height="9.4" fill="#3650a6"/>
<text x="571.7" y="257.3" font-size="5.8" fill="#333" text-anchor="end" >Coffee</text>
<rect x="576.5" y="263.0" width="24.5" height="9.4" fill="#3650a6"/>
<text x="571.7" y="269.7" font-size="5.8" fill="#333" text-anchor="end" >Jacket Pot...</text>
<rect x="576.5" y="275.5" width="21.5" height="9.4" fill="#3650a6"/>
<text x="571.7" y="282.2" font-size="5.8" fill="#333" text-anchor="end" >Samosa</text>
<rect x="576.5" y="287.9" width="14.2" height="9.4" fill="#3650a6"/>
<text x="571.7" y="294.6" font-size="5.8" fill="#333" text-anchor="end" >Sausage R...</text>
<rect x="576.5" y="300.4" width="11.2" height="9.4" fill="#3650a6"/>
<text x="571.7" y="307.1" font-size="5.8" fill="#333" text-anchor="end" >Blueberry ...</text>
<rect x="576.5" y="312.8" width="9.5" height="9.4" fill="#3650a6"/>
<text x="571.7" y="319.5" font-size="5.8" fill="#333" text-anchor="end" >Soup</text>
<rect x="576.5" y="325.2" width="9.5" height="9.4" fill="#3650a6"/>
<text x="571.7" y="331.9" font-size="5.8" fill="#333" text-anchor="end" >Sandwich</text>
<rect x="576.5" y="337.7" width="8.3" height="9.4" fill="#3650a6"/>
<text x="571.7" y="344.4" font-size="5.8" fill="#333" text-anchor="end" >Cornish P...</text>
<rect x="576.5" y="350.1" width="8.3" height="9.4" fill="#3650a6"/>
<text x="571.7" y="356.8" font-size="5.8" fill="#333" text-anchor="end" >Tea</text>
<rect x="576.5" y="362.5" width="7.5" height="9.4" fill="#3650a6"/>
<text x="571.7" y="369.2" font-size="5.8" fill="#333" text-anchor="end" >Water</text>
<rect x="576.5" y="375.0" width="7.5" height="9.4" fill="#3650a6"/>
<text x="571.7" y="381.7" font-size="5.8" fill="#333" text-anchor="end" >Crisps</text>
<rect x="576.5" y="387.4" width="7.0" height="9.4" fill="#3650a6"/>
<text x="571.7" y="394.1" font-size="5.8" fill="#333" text-anchor="end" >Caramel S...</text>
<rect x="576.5" y="399.8" width="5.5" height="9.4" fill="#3650a6"/>
<text x="571.7" y="406.5" font-size="5.8" fill="#333" text-anchor="end" >Croissant</text>
<rect x="576.5" y="412.3" width="4.5" height="9.4" fill="#3650a6"/>
<text x="571.7" y="419.0" font-size="5.8" fill="#333" text-anchor="end" >Flapjack</text>
<rect x="576.5" y="424.7" width="4.5" height="9.4" fill="#3650a6"/>
<text x="571.7" y="431.4" font-size="5.8" fill="#333" text-anchor="end" >Chocolate ...</text>
<rect x="576.5" y="437.1" width="4.0" height="9.4" fill="#3650a6"/>
<text x="571.7" y="443.8" font-size="5.8" fill="#333" text-anchor="end" >Hot Choc...</text>
<rect x="576.5" y="449.6" width="3.2" height="9.4" fill="#3650a6"/>
<text x="571.7" y="456.3" font-size="5.8" fill="#333" text-anchor="end" >Orange Ju...</text>
<text x="0" y="0" font-size="6.5" fill="#333" font-weight="bold" transform="translate(529.5,347) rotate(-90)" textLength="24" lengthAdjust="spacingAndGlyphs">Product</text>
<text x="578.8" y="470.5" font-size="5.5" fill="#3a3a3a" textLength="14" lengthAdjust="spacingAndGlyphs" text-anchor="middle" >$0.0M</text>
<text x="636" y="470.5" font-size="5.5" fill="#3a3a3a" textLength="14" lengthAdjust="spacingAndGlyphs" text-anchor="middle" >$0.1M</text>
<text x="594" y="480.8" font-size="7.5" fill="#333" textLength="52.5" lengthAdjust="spacingAndGlyphs" >Sum of Revenue</text>
<g fill="none" stroke="#e8e8e8" stroke-width="1.1">
<path d="M4.5,136V145.5H15"/><rect x="6.5" y="139.5" width="2" height="5" fill="#e8e8e8" stroke="none"/><rect x="9.5" y="137.5" width="2" height="7" fill="#e8e8e8" stroke="none"/><rect x="12.5" y="136.5" width="2" height="8" fill="#e8e8e8" stroke="none"/>
<rect x="3.8" y="163.8" width="12" height="10.5" rx="1"/><path d="M3.8,167.3H15.8M3.8,170.8H15.8M7.8,163.8V174.3M11.8,163.8V174.3"/>
<rect x="3.5" y="196" width="6" height="5"/><rect x="10.5" y="192.5" width="5.5" height="4"/><rect x="10.5" y="197.8" width="5.5" height="4"/><rect x="10.5" y="203" width="5.5" height="3.5"/><path d="M9.5,198.5H10.5"/>
<path d="M5.5,232V222.5H11L14,225.5V232"/><path d="M11,222.5V225.5H14"/><path d="M14.5,229.5V233.5" stroke-width="0.9"/>
<path d="M5.5,261V251.5H10L13.5,255V261"/><path d="M10,251.5C10,254 11,255 13.5,255"/>
</g>
<text x="2.2" y="235" font-size="5.5" fill="#fff" textLength="11.5" lengthAdjust="spacingAndGlyphs" font-weight="bold" >DAX</text>
<text x="2.5" y="264.5" font-size="5.5" fill="#fff" textLength="12.5" lengthAdjust="spacingAndGlyphs" font-weight="bold" >TMDL</text>
<path d="M700.8,135.8L697.3,139.2L700.8,142.6" stroke="#111" stroke-width="1.8" fill="none"/>
<path d="M695.5,157.5H702.5M696.5,160H701.5M697.5,162.5H700.5" stroke="#333" stroke-width="1"/>
<text x="0" y="0" font-size="11" fill="#111" stroke="#111" stroke-width="0.3" transform="translate(694.5,172) rotate(90)" textLength="33" lengthAdjust="spacingAndGlyphs">Filters</text>
<text x="717" y="143.5" font-size="12" fill="#f2f2f2" textLength="26.5" lengthAdjust="spacingAndGlyphs" font-weight="bold" >Build</text>
<circle cx="813.5" cy="139.5" r="0.8" fill="#ddd"/>
<circle cx="816.5" cy="139.5" r="0.8" fill="#ddd"/>
<circle cx="819.5" cy="139.5" r="0.8" fill="#ddd"/>
<path d="M829,136L832,139.5L829,143M832.5,136L835.5,139.5L832.5,143" stroke="#ddd" stroke-width="1" fill="none"/>
<text x="717" y="161.5" font-size="9.5" fill="#e8e8e8" textLength="46" lengthAdjust="spacingAndGlyphs"  stroke="#e8e8e8" stroke-width="0.28">Suggestions</text>
<rect x="716.5" y="166.5" width="120.5" height="157.5" rx="2" fill="#050505" stroke="#5a5a5a" stroke-width="1"/>
<g stroke-width="1">
<path d="M723.2,173.0V185.0H734.7" stroke="#e8e8e8" fill="none"/><rect x="724.7" y="174.5" width="3" height="2.5" fill="#e8e8e8"/><rect x="727.7" y="174.5" width="3.5" height="2.5" fill="#2f86d8"/><rect x="724.7" y="178.0" width="5" height="2.5" fill="#e8e8e8"/><rect x="724.7" y="181.5" width="3" height="2.2" fill="#e8e8e8"/><rect x="727.7" y="181.5" width="5" height="2.2" fill="#888"/>
<path d="M742.3,173.0V185.0H753.8" stroke="#e8e8e8" fill="none"/><rect x="744.3" y="177.0" width="2.5" height="7.5" fill="none" stroke="#e8e8e8" stroke-width="0.9"/><rect x="744.8" y="180.0" width="1.8" height="4" fill="#2f86d8"/><rect x="748.3" y="175.0" width="2.5" height="9.5" fill="none" stroke="#e8e8e8" stroke-width="0.9"/><rect x="748.8" y="179.0" width="1.8" height="5" fill="#999"/><rect x="751.8" y="176.0" width="1.8" height="8.5" fill="#e8e8e8"/>
<path d="M761.4,173.0V185.0" stroke="#e8e8e8" fill="none"/><rect x="761.9" y="174.5" width="10.5" height="3" fill="#2f86d8"/><rect x="761.9" y="178.5" width="5" height="2.2" fill="#e8e8e8"/><rect x="761.9" y="181.5" width="8" height="2.5" fill="#999"/><path d="M760.9,184.5H772.9" stroke="#aaa"/>
<path d="M780.5,173.0V185.0H792.0" stroke="#e8e8e8" fill="none"/><rect x="782.0" y="174.0" width="3" height="10.5" fill="#2f86d8"/><rect x="785.5" y="178.0" width="2.5" height="6.5" fill="#999"/><rect x="788.5" y="180.0" width="2.5" height="4.5" fill="#e8e8e8"/>
<path d="M799.6,173.0V185.0H811.1" stroke="#e8e8e8" fill="none"/><rect x="801.1" y="174.5" width="3" height="2.5" fill="#e8e8e8"/><rect x="804.1" y="174.5" width="3.5" height="2.5" fill="#2f86d8"/><rect x="801.1" y="178.0" width="5" height="2.5" fill="#e8e8e8"/><rect x="801.1" y="181.5" width="3" height="2.2" fill="#e8e8e8"/><rect x="804.1" y="181.5" width="5" height="2.2" fill="#888"/>
<path d="M818.7,173.0V185.0H830.2" stroke="#e8e8e8" fill="none"/><rect x="820.7" y="177.0" width="2.5" height="7.5" fill="none" stroke="#e8e8e8" stroke-width="0.9"/><rect x="821.2" y="180.0" width="1.8" height="4" fill="#2f86d8"/><rect x="824.7" y="175.0" width="2.5" height="9.5" fill="none" stroke="#e8e8e8" stroke-width="0.9"/><rect x="825.2" y="179.0" width="1.8" height="5" fill="#999"/><rect x="828.2" y="176.0" width="1.8" height="8.5" fill="#e8e8e8"/>
<path d="M723.2,192.2V204.2H734.7" stroke="#e8e8e8" fill="none"/><path d="M723.7,201.2L726.7,197.2L729.7,200.2L734.2,195.2" stroke="#e8e8e8" fill="none"/><path d="M723.7,202.7L727.7,200.2L730.7,201.2L734.2,198.2" stroke="#2f86d8" fill="none"/>
<path d="M741.8,204.2L745.8,195.2L748.8,199.2L750.8,194.2L753.8,204.2Z" fill="none" stroke="#e8e8e8"/><path d="M742.8,204.2L747.8,198.2L751.8,204.2Z" fill="#2f86d8"/>
<path d="M761.4,192.2V204.2H772.9" stroke="#e8e8e8" fill="none"/><path d="M761.9,194.2L765.4,198.2L768.9,194.7L772.9,197.7V201.2L768.9,198.2L765.4,201.7L761.9,198.2Z" fill="#2f86d8"/><path d="M761.9,198.2L765.4,201.7L768.9,198.2L772.9,201.2" stroke="#e8e8e8" fill="none" stroke-width="0.9"/>
<path d="M780.5,192.2V204.2H792.0" stroke="#e8e8e8" fill="none"/><path d="M781.0,193.2H792.0V201.2L788.5,198.2L784.5,201.2L781.0,198.2Z" fill="#2f86d8"/><path d="M781.0,198.2L784.5,201.2L788.5,198.2L792.0,201.2" stroke="#e8e8e8" fill="none" stroke-width="0.9"/>
<path d="M799.6,192.2V204.2H811.1" stroke="#e8e8e8" fill="none"/><rect x="801.1" y="198.2" width="2.5" height="5.5" fill="#2f86d8"/><rect x="804.6" y="195.2" width="2.5" height="8.5" fill="#999"/><rect x="808.1" y="197.2" width="2.5" height="6.5" fill="#999"/><path d="M800.1,201.2L803.1,196.2L806.1,199.2L810.1,194.2" stroke="#e8e8e8" fill="none" stroke-width="0.9"/>
<path d="M818.7,192.2V204.2H830.2" stroke="#e8e8e8" fill="none"/><rect x="820.2" y="198.2" width="2.5" height="5.5" fill="#2f86d8"/><rect x="823.7" y="195.2" width="2.5" height="8.5" fill="#999"/><rect x="827.2" y="197.2" width="2.5" height="6.5" fill="#999"/><path d="M819.2,201.2L822.2,196.2L825.2,199.2L829.2,194.2" stroke="#e8e8e8" fill="none" stroke-width="0.9"/>
<path d="M723.2,211.4V223.4H734.7" stroke="#e8e8e8" fill="none"/><path d="M723.7,216.4L727.7,219.4L730.7,215.4L734.7,217.4V221.4L730.7,219.4L727.7,222.4L723.7,220.4Z" fill="#f0a020" opacity="0.8"/><path d="M723.7,218.4L727.7,215.4L731.7,220.4L734.7,216.4" stroke="#2f86d8" fill="none" stroke-width="1.3"/>
<path d="M742.3,211.4V223.4H753.8" stroke="#e8e8e8" fill="none"/><rect x="743.8" y="216.4" width="2" height="6" fill="none" stroke="#e8e8e8" stroke-width="0.8"/><rect x="746.8" y="213.4" width="2" height="5" fill="none" stroke="#e8e8e8" stroke-width="0.8"/><rect x="749.8" y="212.4" width="2" height="10" fill="none" stroke="#e8e8e8" stroke-width="0.8"/>
<rect x="760.9" y="212.4" width="12" height="3" fill="#2f86d8"/><rect x="762.9" y="216.4" width="8" height="3" fill="#2f86d8"/><rect x="764.9" y="220.4" width="4" height="3" fill="#2f86d8"/><path d="M760.9,212.4H772.9" stroke="#e8e8e8"/>
<path d="M780.5,211.4V223.4H792.0" stroke="#e8e8e8" fill="none"/><rect x="783.0" y="218.4" width="1.6" height="1.6" fill="#2f86d8"/><rect x="785.0" y="215.4" width="1.6" height="1.6" fill="#2f86d8"/><rect x="787.0" y="219.4" width="1.6" height="1.6" fill="#2f86d8"/><rect x="789.0" y="214.4" width="1.6" height="1.6" fill="#2f86d8"/><rect x="786.0" y="217.4" width="1.6" height="1.6" fill="#2f86d8"/><rect x="790.0" y="220.4" width="1.6" height="1.6" fill="#2f86d8"/>
<circle cx="805.1" cy="217.4" r="5.5" fill="none" stroke="#e8e8e8"/><path d="M805.1,211.9A5.5,5.5 0 0 1 808.6,221.6L805.1,217.4Z" fill="#2f86d8"/>
<circle cx="824.2" cy="217.4" r="4.6" fill="none" stroke="#2f86d8" stroke-width="2.2"/><path d="M820.2,214.9A4.6,4.6 0 0 1 822.7,213.0" fill="none" stroke="#888" stroke-width="2.2"/>
<rect x="723.2" y="231.1" width="11" height="11" fill="none" stroke="#e8e8e8"/><rect x="723.7" y="231.6" width="5" height="5" fill="#2f86d8"/><rect x="723.7" y="237.1" width="5" height="4.5" fill="#2f86d8"/><path d="M729.2,231.6V241.6M729.2,234.6H733.7M731.7,234.6V241.6" stroke="#e8e8e8"/>
<circle cx="747.8" cy="236.1" r="4.5" fill="none" stroke="#e8e8e8"/><circle cx="747.8" cy="236.1" r="2.6" fill="#1d4a30"/><path d="M746.3,235.1L748.3,237.6L749.3,234.6" stroke="#4cb070" fill="none" stroke-width="0.9"/><path d="M747.8,240.6V242.6M744.8,242.6H750.8" stroke="#e8e8e8"/>
<path d="M760.9,232.6L766.9,231.6L772.9,232.6V238.6L766.9,242.6L760.9,238.6Z" fill="none" stroke="#e8e8e8"/><path d="M761.9,233.6L766.9,232.6V237.6L761.9,237.6Z" fill="#2f86d8"/><path d="M767.9,237.6H771.9V238.6L767.9,241.6Z" fill="#2f86d8"/>
<path d="M780.0,232.6L786.0,231.6L792.0,232.6V238.6L786.0,242.6L780.0,238.6Z" fill="none" stroke="#e8e8e8"/><path d="M786.0,231.6V242.6M780.0,236.6H792.0" stroke="#e8e8e8" stroke-width="0.8"/><path d="M787.0,233.6H791.0V235.6H787.0Z" fill="#2f86d8"/>
<path d="M805.1,230.6L811.1,242.6L805.1,239.6L799.1,242.6Z" fill="#2f86d8"/>
<path d="M818.7,239.6A5.5,5.5 0 0 1 829.7,239.6" fill="none" stroke="#e8e8e8" stroke-width="2"/><path d="M824.2,234.1A5.5,5.5 0 0 1 829.7,239.6" fill="none" stroke="#2f86d8" stroke-width="2"/><path d="M824.2,239.6L826.2,236.6" stroke="#e8e8e8"/>
<rect x="723.2" y="251.3" width="11" height="9" fill="#0a0a0a" stroke="#e8e8e8"/><text x="724.7" y="257.40000000000003" font-size="5.5" fill="#8ab8e8" textLength="8" lengthAdjust="spacingAndGlyphs">123</text><path d="M723.7,259.0H733.7" stroke="#888"/>
<rect x="742.3" y="250.3" width="11" height="11" fill="none" stroke="#e8e8e8"/><path d="M744.8,252.8H750.8" stroke="#2f86d8" stroke-width="1.2"/><path d="M744.8,255.3H748.8M744.8,257.8H750.8" stroke="#e8e8e8"/>
<rect x="761.4" y="251.3" width="11" height="9" fill="none" stroke="#e8e8e8"/><path d="M763.9,256.8L765.4,253.8L766.9,256.8Z" fill="#3cb371"/><path d="M767.4,253.8L768.9,256.8L770.4,253.8Z" fill="#e04040"/>
<rect x="780.5" y="250.3" width="11" height="11" fill="none" stroke="#e8e8e8"/><path d="M780.5,253.3H791.5" stroke="#e8e8e8"/><path d="M785.0,254.8H791.0L788.5,257.8V260.8L787.5,259.8V257.8Z" fill="none" stroke="#e8e8e8" stroke-width="0.9"/>
<rect x="799.6" y="250.3" width="11" height="11" fill="none" stroke="#e8e8e8"/><path d="M799.6,254.0H810.6M799.6,257.6H810.6M803.3000000000001,250.3V261.3M806.9,250.3V261.3" stroke="#e8e8e8" stroke-width="0.9"/>
<rect x="818.7" y="250.3" width="11" height="11" fill="none" stroke="#e8e8e8"/><rect x="822.7" y="254.3" width="7" height="7" fill="#2f86d8"/><path d="M818.7,254.0H829.7M818.7,257.6H829.7M822.4000000000001,250.3V261.3M826.0,250.3V261.3" stroke="#e8e8e8" stroke-width="0.9"/>
<text x="724.7" y="280.5" font-size="12" font-weight="bold" fill="#2f86d8">R</text>
<text x="740.8" y="280.5" font-size="12" font-weight="bold" fill="#2f86d8" textLength="14" lengthAdjust="spacingAndGlyphs">Py</text>
<path d="M761.4,269.0V281.0H772.9" stroke="#e8e8e8" fill="none"/><path d="M762.9,273.0H766.9M762.9,276.0H768.9M762.9,279.0H765.9" stroke="#e8e8e8"/><circle cx="770.9" cy="271.5" r="1.5" fill="#2f86d8"/>
<rect x="780.0" y="274.0" width="4" height="3" fill="#2f86d8"/><path d="M784.0,275.5H786.0M786.0,271.0V280.0" stroke="#e8e8e8"/><rect x="787.0" y="270.0" width="4" height="2.5" fill="none" stroke="#e8e8e8" stroke-width="0.8"/><rect x="787.0" y="274.0" width="4" height="2.5" fill="#2f86d8"/><rect x="787.0" y="278.0" width="4" height="2.5" fill="none" stroke="#e8e8e8" stroke-width="0.8"/>
<path d="M799.6,270.0H810.6V277.5H804.1L801.6,280.0V277.5H799.6Z" fill="none" stroke="#e8e8e8"/>
<path d="M819.7,269.0H826.2L829.2,272.0V281.0H819.7Z" fill="none" stroke="#e8e8e8"/><path d="M822.2,274.0H826.2M822.2,277.0H827.2" stroke="#2f86d8"/>
<path d="M724.7,289.2H732.7V293.2A4,4 0 0 1 724.7,293.2Z" fill="none" stroke="#e8e8e8"/><path d="M724.7,291.2H722.7V292.2A2,2 0 0 0 724.7,294.2M732.7,291.2H734.7V292.2A2,2 0 0 1 732.7,294.2M728.7,297.2V299.2M725.7,299.7H731.7" stroke="#e8e8e8" fill="none"/><path d="M726.2,290.2H731.2V293.2A2.5,2.5 0 0 1 726.2,293.2Z" fill="#2f86d8"/>
<path d="M743.3,288.2H749.8L752.8,291.2V300.2H743.3Z" fill="none" stroke="#e8e8e8"/><path d="M745.8,298.2V295.2M747.8,298.2V293.2M749.8,298.2V296.2" stroke="#e8e8e8"/>
<rect x="763.4" y="290.7" width="10" height="8" fill="none" stroke="#e8e8e8"/><text x="765.4" y="296.7" font-size="5" fill="#6aa8e0" textLength="7" lengthAdjust="spacingAndGlyphs">123</text><path d="M763.9,287.7H767.1L765.1,291.4H767.3L761.4,297.2L763.1,292.8H761.1Z" fill="#f0a020" stroke="#000" stroke-width="0.5"/>
<rect x="784.0" y="289.7" width="7" height="4" fill="none" stroke="#e8e8e8" stroke-width="0.9"/><path d="M784.5,294.2H792.5L789.8,297.4V300.7H787.2V297.4Z" fill="#000" stroke="#e8e8e8" stroke-width="0.9"/><path d="M781.0,297.2V300.2H786.0" stroke="#aaa" fill="none" stroke-width="0.8"/><path d="M783.0,287.7H786.2L784.2,291.4H786.4L780.5,297.2L782.2,292.8H780.2Z" fill="#f0a020" stroke="#000" stroke-width="0.5"/>
<rect x="800.6" y="290.7" width="9" height="9" fill="none" stroke="#e8e8e8" stroke-width="0.9"/><path d="M803.1,298.2L805.1,292.2L807.1,298.2" stroke="#6aa8e0" fill="none" stroke-width="0.9"/><path d="M805.1,295.2H811.6L809.1,298.0V300.7H807.3000000000001V298.0Z" fill="#000" stroke="#e8e8e8" stroke-width="0.9"/><path d="M802.1,287.7H805.3000000000001L803.3000000000001,291.4H805.5L799.6,297.2L801.3000000000001,292.8H799.3000000000001Z" fill="#f0a020" stroke="#000" stroke-width="0.5"/>
<rect x="819.7" y="290.7" width="9" height="9" fill="none" stroke="#e8e8e8" stroke-width="0.9"/><path d="M824.2,292.7H828.2M821.7,297.2H824.2" stroke="#aaa" stroke-width="0.8"/><path d="M824.2,295.2H830.7L828.2,298.0V300.7H826.4000000000001V298.0Z" fill="#000" stroke="#e8e8e8" stroke-width="0.9"/><path d="M821.2,287.7H824.4000000000001L822.4000000000001,291.4H824.6L818.7,297.2L820.4000000000001,292.8H818.4000000000001Z" fill="#f0a020" stroke="#000" stroke-width="0.5"/>
<rect x="723.7" y="309.9" width="10" height="10" fill="none" stroke="#2f86d8" stroke-width="1.2"/><path d="M725.7,317.4L728.7,314.4L729.7,312.4" stroke="#2f86d8" fill="none" stroke-width="1"/><path d="M724.2,307.4A2,2 0 0 1 727.2,307.4C727.2,309.4 725.7,311.4 725.7,311.4C725.7,311.4 724.2,309.4 724.2,307.4Z" fill="#f0a020"/><circle cx="733.7" cy="318.9" r="1.6" fill="#f0a020"/><rect x="732.2" y="313.9" width="2.5" height="2.5" fill="#f0a020"/>
<path d="M747.8,307.4L753.8,313.4L747.8,319.4L741.8,313.4Z" fill="none" stroke="#a050c8" stroke-width="1.1"/><path d="M744.8,310.4L750.8,316.4M750.8,310.4L744.8,316.4" stroke="#a050c8" stroke-width="0.9"/>
<path d="M760.9,308.9H767.4L772.4,313.9L767.4,318.9H760.9L765.9,313.9Z" fill="none" stroke="#2f86d8" stroke-width="1.1"/><path d="M763.4,317.4L768.4,311.4" stroke="#2f86d8" stroke-width="0.9"/>
<circle cx="783.0" cy="313.4" r="0.9" fill="#e8e8e8"/><circle cx="786.0" cy="313.4" r="0.9" fill="#e8e8e8"/><circle cx="789.0" cy="313.4" r="0.9" fill="#e8e8e8"/>
</g>
<text x="717" y="338.8" font-size="9" fill="#e8e8e8" textLength="17" lengthAdjust="spacingAndGlyphs"  stroke="#e8e8e8" stroke-width="0.28">Data</text>
<rect x="716.5" y="344.5" width="120.5" height="29" fill="none" stroke="#bdbdbd" stroke-width="1" stroke-dasharray="2 2"/>
<rect x="720.5" y="348.5" width="113" height="21.5" rx="1" fill="#242424" stroke="#8a8a8a" stroke-width="1"/>
<text x="757" y="362" font-size="9.5" fill="#f0f0f0" textLength="40" lengthAdjust="spacingAndGlyphs"  stroke="#f0f0f0" stroke-width="0.28">+Add data</text>
<text x="849" y="143.5" font-size="12" fill="#f2f2f2" textLength="24.5" lengthAdjust="spacingAndGlyphs" font-weight="bold" >Data</text>
<circle cx="946.5" cy="139.5" r="0.8" fill="#ddd"/>
<circle cx="949.5" cy="139.5" r="0.8" fill="#ddd"/>
<circle cx="952.5" cy="139.5" r="0.8" fill="#ddd"/>
<path d="M963,137L965.5,139.5L963,142M966,137L968.5,139.5L966,142" stroke="#ddd" stroke-width="1" fill="none"/>
<rect x="847.5" y="159.5" width="126" height="16" rx="3.5" fill="#1c1c1c" stroke="#6a6a6a" stroke-width="1"/>
<g fill="none" stroke="#cfcfcf" stroke-width="1.1"><circle cx="861" cy="166.5" r="3.8"/><path d="M863.8,169.3L866.5,172"/></g>
<text x="871" y="171.3" font-size="10" fill="#bdbdbd" textLength="30" lengthAdjust="spacingAndGlyphs" >Search</text>
<path d="M856,188.5L859.2,191.7L856,194.9" stroke="#e0e0e0" stroke-width="1" fill="none"/>
<g fill="none" stroke="#e8e8e8" stroke-width="1"><rect x="865.5" y="187.2" width="8.5" height="9"/><path d="M865.5,189.9H874M865.5,193.3H874M868.3,187.2V196.2M871.2,187.2V196.2"/></g>
<text x="879" y="195.3" font-size="10" fill="#e6e6e6" textLength="39" lengthAdjust="spacingAndGlyphs"  stroke="#e6e6e6" stroke-width="0.28">Calendar</text>
<path d="M856,206.2L859.2,209.4L856,212.6" stroke="#e0e0e0" stroke-width="1" fill="none"/>
<g fill="none" stroke="#e8e8e8" stroke-width="1"><rect x="865.5" y="204.9" width="8.5" height="9"/><path d="M865.5,207.6H874M865.5,211.0H874M868.3,204.9V213.9M871.2,204.9V213.9"/></g>
<text x="879" y="213.0" font-size="10" fill="#e6e6e6" textLength="45.5" lengthAdjust="spacingAndGlyphs"  stroke="#e6e6e6" stroke-width="0.28">dCategories</text>
<path d="M856,224.0L859.2,227.2L856,230.4" stroke="#e0e0e0" stroke-width="1" fill="none"/>
<g fill="none" stroke="#e8e8e8" stroke-width="1"><rect x="865.5" y="222.7" width="8.5" height="9"/><path d="M865.5,225.4H874M865.5,228.8H874M868.3,222.7V231.7M871.2,222.7V231.7"/></g>
<text x="879" y="230.8" font-size="10" fill="#e6e6e6" textLength="40.5" lengthAdjust="spacingAndGlyphs"  stroke="#e6e6e6" stroke-width="0.28">dProducts</text>
<path d="M856,241.8L859.2,244.9L856,248.1" stroke="#e0e0e0" stroke-width="1" fill="none"/>
<g fill="none" stroke="#e8e8e8" stroke-width="1"><rect x="865.5" y="240.4" width="8.5" height="9"/><path d="M865.5,243.1H874M865.5,246.5H874M868.3,240.4V249.4M871.2,240.4V249.4"/></g>
<text x="879" y="248.5" font-size="10" fill="#e6e6e6" textLength="43" lengthAdjust="spacingAndGlyphs"  stroke="#e6e6e6" stroke-width="0.28">dSalesReps</text>
<path d="M856,259.5L859.2,262.7L856,265.9" stroke="#e0e0e0" stroke-width="1" fill="none"/>
<g fill="none" stroke="#e8e8e8" stroke-width="1"><rect x="865.5" y="258.2" width="8.5" height="9"/><path d="M865.5,260.9H874M865.5,264.3H874M868.3,258.2V267.2M871.2,258.2V267.2"/></g>
<text x="879" y="266.3" font-size="10" fill="#e6e6e6" textLength="26" lengthAdjust="spacingAndGlyphs"  stroke="#e6e6e6" stroke-width="0.28">dStore</text>
<path d="M856,277.2L859.2,280.4L856,283.6" stroke="#e0e0e0" stroke-width="1" fill="none"/>
<g fill="none" stroke="#e8e8e8" stroke-width="1"><rect x="865.5" y="275.9" width="8.5" height="9"/><path d="M865.5,278.6H874M865.5,282.1H874M868.3,275.9V284.9M871.2,275.9V284.9"/></g>
<text x="879" y="284.1" font-size="10" fill="#e6e6e6" textLength="22" lengthAdjust="spacingAndGlyphs"  stroke="#e6e6e6" stroke-width="0.28">fSales</text>
<path d="M856,295.0L859.2,298.2L856,301.4" stroke="#e0e0e0" stroke-width="1" fill="none"/>
<g fill="none" stroke="#e8e8e8" stroke-width="1"><rect x="865.5" y="293.7" width="8.5" height="9"/><path d="M865.5,296.4H874M865.5,299.8H874M868.3,293.7V302.7M871.2,293.7V302.7"/></g>
<text x="879" y="301.8" font-size="10" fill="#e6e6e6" textLength="48" lengthAdjust="spacingAndGlyphs"  stroke="#e6e6e6" stroke-width="0.28">new-products</text>
<path d="M856,312.8L859.2,315.9L856,319.1" stroke="#e0e0e0" stroke-width="1" fill="none"/>
<g fill="none" stroke="#e8e8e8" stroke-width="1"><rect x="865.5" y="311.4" width="8.5" height="9"/><path d="M865.5,314.1H874M865.5,317.6H874M868.3,311.4V320.4M871.2,311.4V320.4"/></g>
<text x="879" y="319.6" font-size="10" fill="#e6e6e6" textLength="52" lengthAdjust="spacingAndGlyphs"  stroke="#e6e6e6" stroke-width="0.28">ProductCosts</text>
<rect x="977" y="126" width="23" height="22" fill="#2e2e2e" />
<rect x="977" y="148" width="23" height="1.5" fill="#555" />
<rect x="977" y="150" width="23" height="22" fill="#2e2e2e" />
<rect x="977" y="172.5" width="23" height="1.5" fill="#555" />
<g fill="none" stroke="#eee" stroke-width="1.1"><ellipse cx="989" cy="132.5" rx="4.8" ry="1.6"/><path d="M984.2,132.5V142.3C984.2,144.2 993.8,144.2 993.8,142.3V132.5"/></g>
<g fill="none" stroke="#eee" stroke-width="1.1"><path d="M983.5,167.5V160H987V167.5"/><path d="M987,167.5V154.5H990.5V158"/><path d="M983,167.5H989"/></g><path d="M990.5,160C990.5,158.3 995.5,158.3 995.5,160V166.5C995.5,168.2 990.5,168.2 990.5,166.5Z" fill="#2e2e2e" stroke="#e0a050" stroke-width="1.1"/>
<g fill="none" stroke="#eee" stroke-width="1.1"><path d="M983.5,190V183.5H986.7V190"/><path d="M986.7,186V178.5H990V184.5"/></g><path d="M988.5,188L995,181.5L996,182.5L990,189" stroke="#eee" stroke-width="1.1" fill="none"/><path d="M985,192C986,189 987.5,187.5 989.5,187.5L990.5,189C989.5,191 987.5,192 985,192Z" fill="#2f7fd8" stroke="#2f7fd8" stroke-width="0.8"/>
<g fill="none" stroke-width="1.2"><path d="M982.5,205.5A3.8,3.8 0 0 1 989,203.5" stroke="#55c070"/><path d="M989.5,207A3.8,3.8 0 0 1 983,209" stroke="#55c070"/><path d="M989.5,201.5V204.2H986.8M982.5,210.5V207.8H985.2" stroke="#55c070" stroke-width="1"/><path d="M990.5,202H995.5V208M991,205H995" stroke="#ddd" stroke-width="1"/><path d="M982.5,210.5V215H988" stroke="#eee" stroke-width="1.1"/><path d="M988.5,208.5H996L993.3,211.8V215.5H991.2V211.8Z" stroke="#eee" stroke-width="1.1"/></g>
<rect x="987.5" y="225" width="8.5" height="8.5" fill="#f0a030"/><rect x="982.5" y="231.5" width="8.5" height="6.5" fill="#2a2a2a" stroke="#eee" stroke-width="1.1"/><path d="M990,229L990,238.5L992.3,236.5L994,240L995.3,239.3L993.6,235.8L996.5,235.5Z" fill="#eee" stroke="#222" stroke-width="0.6"/>
<path d="M988.8,248V261M982.3,254.5H995.3" stroke="#eee" stroke-width="1.2"/>
<rect x="977" y="496" width="23" height="1" fill="#555" />
<g fill="none" stroke="#eee" stroke-width="1.1"><circle cx="988.5" cy="507" r="2"/><path d="M986.3,500.5H990.7L991.5,502.3L993.6,502.5L995.3,505.2L994.3,507L995.3,508.8L993.6,511.5L991.5,511.7L990.7,513.5H986.3L985.5,511.7L983.4,511.5L981.7,508.8L982.7,507L981.7,505.2L983.4,502.5L985.5,502.3Z"/></g>
<rect x="118" y="493" width="1" height="25" fill="#202020" />
<rect x="174" y="493" width="1" height="25" fill="#202020" />
<rect x="230" y="493" width="1" height="25" fill="#202020" />
<rect x="286" y="493" width="1" height="25" fill="#202020" />
<rect x="342" y="493" width="1" height="25" fill="#202020" />
<rect x="398" y="493" width="1" height="25" fill="#202020" />
<g fill="none" stroke="#eee" stroke-width="1"><rect x="35" y="498" width="11" height="8.5" rx="0.8" stroke-width="1.2"/><path d="M40.5,506.5V509M37,509.3H44" stroke-width="1.2"/><rect x="69" y="497.5" width="7.5" height="13.5" rx="1.8" stroke-width="1.2"/></g>
<rect x="32" y="513.5" width="17" height="2" fill="#40c9b5" />
<path d="M96.5,501.5L93.5,504.5L96.5,507.5Z" fill="none" stroke="#ddd" stroke-width="0.9"/><path d="M109,501.5L112,504.5L109,507.5Z" fill="none" stroke="#ddd" stroke-width="0.9"/>
<text x="146" y="509" font-size="10" fill="#ededed" textLength="28.5" lengthAdjust="spacingAndGlyphs" text-anchor="middle"  stroke="#ededed" stroke-width="0.28">Page 1</text>
<text x="202" y="509" font-size="10" fill="#ededed" textLength="28.5" lengthAdjust="spacingAndGlyphs" text-anchor="middle"  stroke="#ededed" stroke-width="0.28">Page 2</text>
<text x="258" y="509" font-size="10" fill="#ededed" textLength="28.5" lengthAdjust="spacingAndGlyphs" text-anchor="middle"  stroke="#ededed" stroke-width="0.28">Page 3</text>
<text x="314" y="509" font-size="10" fill="#ededed" textLength="28.5" lengthAdjust="spacingAndGlyphs" text-anchor="middle"  stroke="#ededed" stroke-width="0.28">Page 4</text>
<text x="370" y="509" font-size="10" fill="#ededed" textLength="28.5" lengthAdjust="spacingAndGlyphs" text-anchor="middle"  stroke="#ededed" stroke-width="0.28">Page 5</text>
<rect x="398.5" y="493" width="56.5" height="25" fill="#1f1f1f" />
<rect x="398.5" y="515" width="56.5" height="3" fill="#38b49c" />
<text x="426.5" y="509" font-size="10" fill="#ffffff" textLength="28.5" lengthAdjust="spacingAndGlyphs" text-anchor="middle"  stroke="#ffffff" stroke-width="0.28">Page 6</text>
<rect x="455" y="493" width="29" height="25" fill="#2fb59c" />
<path d="M469.5,500.5V509.5M465,505H474" stroke="#111" stroke-width="2"/>
<text x="0" y="531.3" font-size="10" fill="#e6e6e6" textLength="40" lengthAdjust="spacingAndGlyphs"  stroke="#e6e6e6" stroke-width="0.28">Page 6 of 6</text>
<path d="M844.5,528H847.5" stroke="#ddd" stroke-width="1.2"/>
<rect x="851" y="527" width="74" height="1.2" fill="#e0e0e0" />
<rect x="872.5" y="523" width="3" height="9" fill="#e8e8e8" />
<rect x="888" y="525" width="1" height="5" fill="#e0e0e0" />
<path d="M929,527.6H936M932.5,524V531.2" stroke="#ddd" stroke-width="1"/>
<text x="944" y="531.3" font-size="10" fill="#d8d8d8" textLength="17.5" lengthAdjust="spacingAndGlyphs" >68%</text>
<rect x="976.5" y="523.5" width="11" height="8" rx="1" fill="none" stroke="#e0e0e0" stroke-width="1"/><path d="M979,526V529M985,526V529" stroke="#e0e0e0" stroke-width="0.8"/>
<g><circle cx="27" cy="512" r="22.5" fill="#56604f" opacity="0.13"/><circle cx="27" cy="512" r="22.5" fill="none" stroke="#8aa845" stroke-width="3" opacity="0.28"/><circle cx="27" cy="512" r="24.8" fill="none" stroke="#6a7a90" stroke-width="1.3" opacity="0.18"/><path d="M15,498L27,522L38,499" fill="none" stroke="#0e1a16" stroke-width="5.5" opacity="0.3"/></g>
</svg>
</body></html>
